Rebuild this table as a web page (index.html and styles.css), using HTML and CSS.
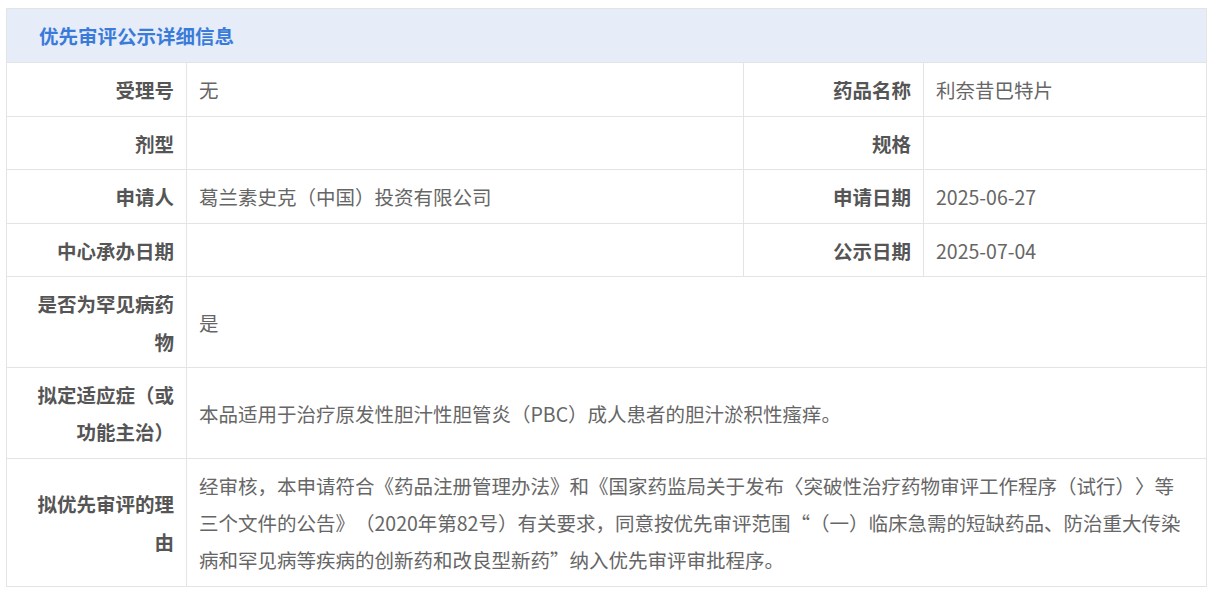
FILE: index.html
```html
<!DOCTYPE html>
<html lang="zh-CN">
<head>
<meta charset="utf-8">
<title>优先审评公示详细信息</title>
<link rel="stylesheet" href="styles.css">
</head>
<body>
<div class="page">
  <table class="detail">
    <colgroup>
      <col class="c-label">
      <col class="c-value">
      <col class="c-label">
      <col class="c-value2">
    </colgroup>
    <thead>
      <tr><th colspan="4" class="title">优先审评公示详细信息</th></tr>
    </thead>
    <tbody>
      <tr>
        <td class="label">受理号</td><td class="value">无</td>
        <td class="label">药品名称</td><td class="value">利奈昔巴特片</td>
      </tr>
      <tr>
        <td class="label">剂型</td><td class="value"></td>
        <td class="label">规格</td><td class="value"></td>
      </tr>
      <tr>
        <td class="label">申请人</td><td class="value">葛兰素史克（中国）投资有限公司</td>
        <td class="label">申请日期</td><td class="value">2025-06-27</td>
      </tr>
      <tr>
        <td class="label">中心承办日期</td><td class="value"></td>
        <td class="label">公示日期</td><td class="value">2025-07-04</td>
      </tr>
      <tr>
        <td class="label">是否为罕见病药物</td><td class="value" colspan="3">是</td>
      </tr>
      <tr>
        <td class="label">拟定适应症（或功能主治）</td><td class="value" colspan="3">本品适用于治疗原发性胆汁性胆管炎（PBC）成人患者的胆汁淤积性瘙痒。</td>
      </tr>
      <tr>
        <td class="label">拟优先审评的理由</td><td class="value" colspan="3">经审核，本申请符合《药品注册管理办法》和《国家药监局关于发布〈突破性治疗药物审评工作程序（试行）〉等三个文件的公告》（2020年第82号）有关要求，同意按优先审评范围“（一）临床急需的短缺药品、防治重大传染病和罕见病等疾病的创新药和改良型新药”纳入优先审评审批程序。</td>
      </tr>
    </tbody>
  </table>
</div>
</body>
</html>
```
FILE: styles.css
```css
html, body {
  margin: 0;
  padding: 0;
  background: #ffffff;
}
.page {
  padding: 8px 0 0 6px;
  font-family: "Noto Sans CJK SC", "Noto Sans", sans-serif;
}
.detail {
  width: 1200px;
  border-collapse: collapse;
  table-layout: fixed;
  font-size: 19.5px;
  text-spacing-trim: space-all;
}
.c-label { width: 180px; }
.c-value { width: 557px; }
.c-value2 { width: 283px; }
.detail th,
.detail td {
  border: 1px solid #e4e4e4;
  line-height: 37.25px;
  padding: 8px 12px 7.25px;
  vertical-align: middle;
}
.detail .title {
  background: #e6edf9;
  color: #3a7bd9;
  font-weight: 700;
  text-align: left;
  padding: 8px 12px 8px 32px;
}
.detail .label {
  color: #555555;
  font-weight: 700;
  text-align: right;
  padding-left: 20px;
}
.detail .value {
  color: #666666;
  font-weight: 400;
  text-align: left;
  padding-right: 16px;
}
```
